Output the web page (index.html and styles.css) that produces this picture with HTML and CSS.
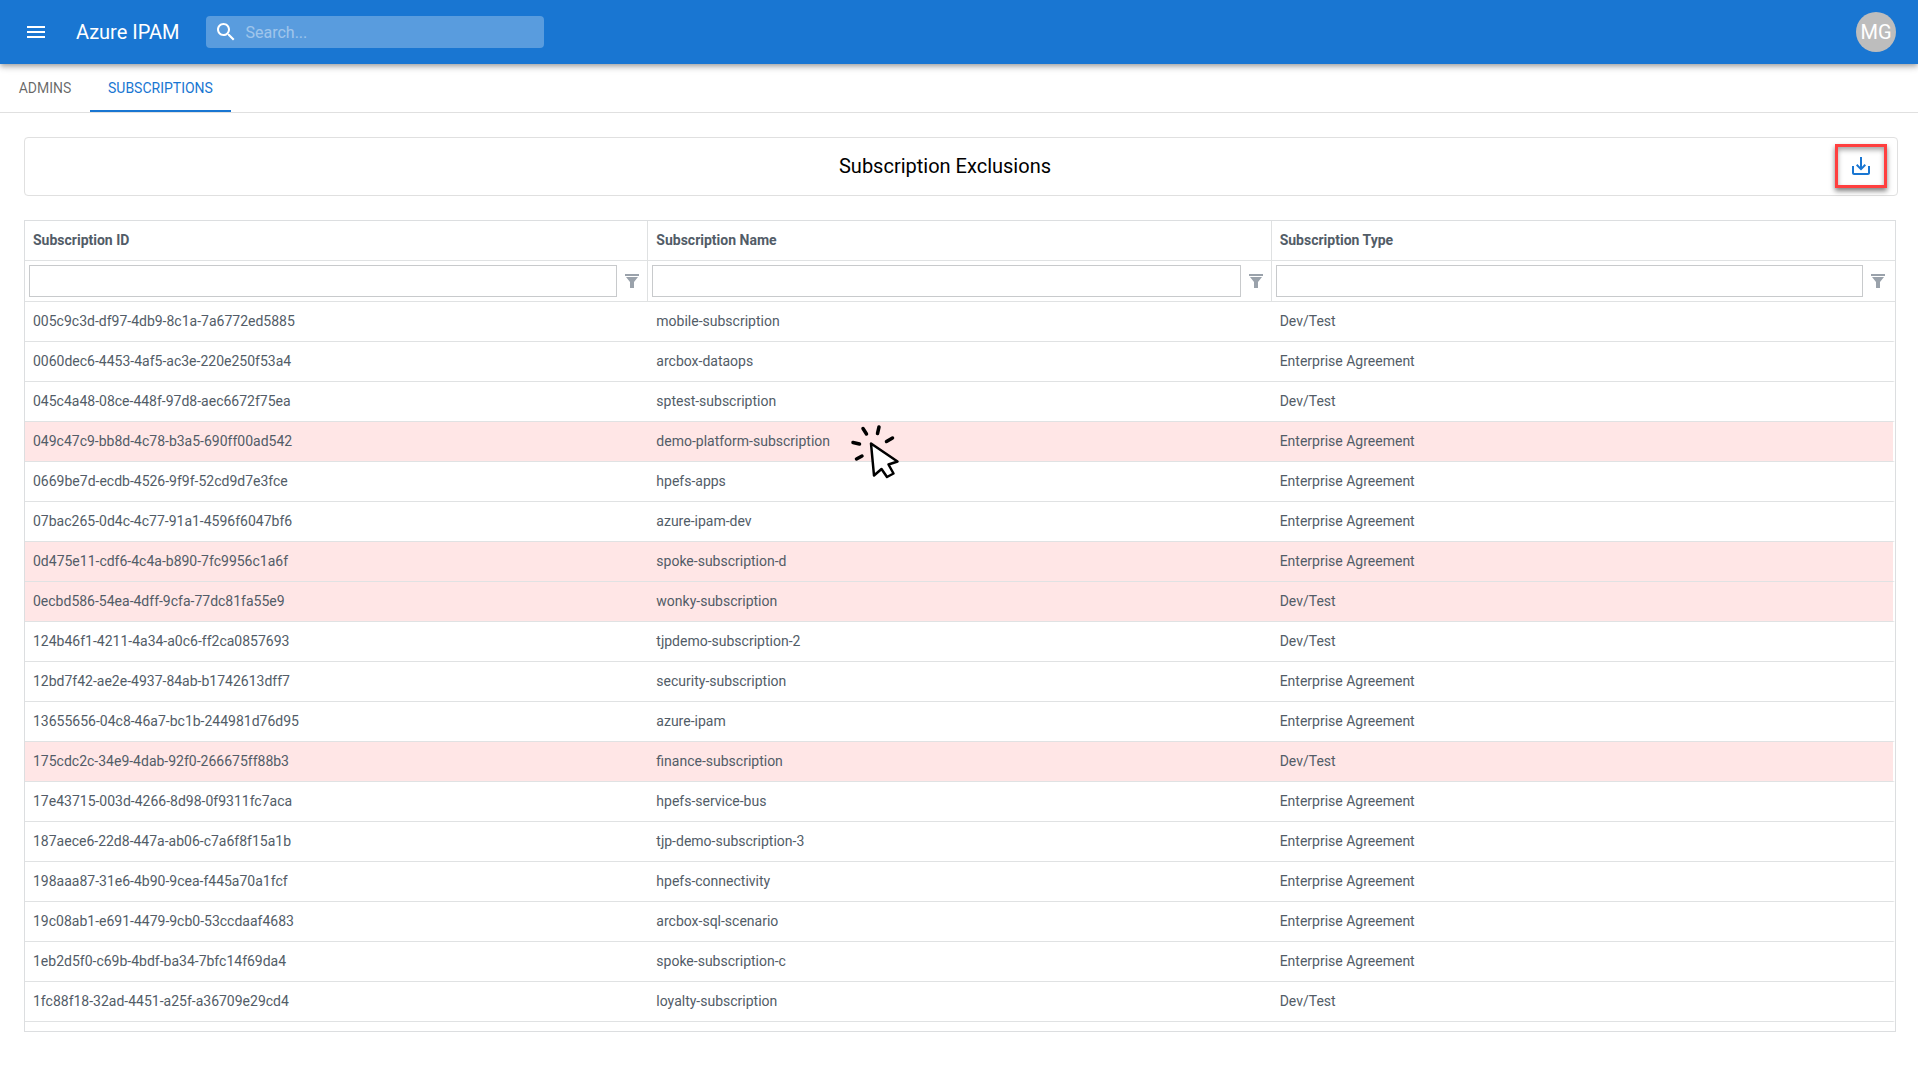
FILE: index.html
```html
<!DOCTYPE html>
<html lang="en">
<head>
<meta charset="utf-8">
<title>Azure IPAM</title>
<link rel="stylesheet" href="styles.css">
</head>
<body>
<header class="appbar">
  <button class="menu-button" aria-label="Open menu"><svg class="icon" viewBox="0 0 24 24"><path d="M3 18h18v-2H3v2zm0-5h18v-2H3v2zm0-7v2h18V6H3z"/></svg></button>
  <span class="brand">Azure IPAM</span>
  <label class="search">
    <svg class="icon" viewBox="0 0 24 24"><path d="M15.500 14h-.79l-.28-.27C15.410 12.590 16 11.110 16 9.500 16 5.910 13.090 3 9.500 3S3 5.910 3 9.500 5.910 16 9.500 16c1.610 0 3.090-.59 4.230-1.570l.27.28v.79l5 4.990L20.490 19l-4.990-5zm-6 0C7.010 14 5 11.990 5 9.500S7.010 5 9.500 5 14 7.010 14 9.500 11.990 14 9.500 14z"/></svg>
    <input class="search-input" type="search" placeholder="Search..." aria-label="Search">
  </label>
  <button class="avatar" aria-label="Account">MG</button>
</header>
<nav class="tabs">
  <a class="tab" href="#admins">ADMINS</a>
  <a class="tab tab-active" href="#subscriptions" aria-current="page">SUBSCRIPTIONS</a>
</nav>
<main class="content">
  <section class="title-card">
    <h1 class="title">Subscription Exclusions</h1>
    <button class="save-button" aria-label="Save"><svg class="icon" viewBox="0 0 24 24"><path d="M19 12v7H5v-7H3v7c0 1.100.9 2 2 2h14c1.100 0 2-.9 2-2v-7h-2zm-6 .67 2.590-2.580L17 11.500l-5 5-5-5 1.410-1.410L11 12.670V3h2z"/></svg></button>
  </section>
  <div class="grid">
    <table class="table">
      <colgroup><col class="col-id"><col><col></colgroup>
      <thead>
        <tr class="names"><th scope="col">Subscription ID</th><th scope="col">Subscription Name</th><th scope="col">Subscription Type</th></tr>
        <tr class="filters">
          <td><div class="filter"><input class="filter-input" aria-label="Filter by ID"><button class="filter-button" aria-label="ID filter options"><svg class="funnel" viewBox="0 0 14 14"><path d="M0 0h14v2H0zM1 3h12L9 8v6H5V8z"/></svg></button></div></td>
          <td><div class="filter"><input class="filter-input" aria-label="Filter by name"><button class="filter-button" aria-label="Name filter options"><svg class="funnel" viewBox="0 0 14 14"><path d="M0 0h14v2H0zM1 3h12L9 8v6H5V8z"/></svg></button></div></td>
          <td><div class="filter"><input class="filter-input" aria-label="Filter by type"><button class="filter-button" aria-label="Type filter options"><svg class="funnel" viewBox="0 0 14 14"><path d="M0 0h14v2H0zM1 3h12L9 8v6H5V8z"/></svg></button></div></td>
        </tr>
      </thead>
      <tbody>
        <tr><td>005c9c3d-df97-4db9-8c1a-7a6772ed5885</td><td>mobile-subscription</td><td>Dev/Test</td></tr>
        <tr><td>0060dec6-4453-4af5-ac3e-220e250f53a4</td><td>arcbox-dataops</td><td>Enterprise Agreement</td></tr>
        <tr><td>045c4a48-08ce-448f-97d8-aec6672f75ea</td><td>sptest-subscription</td><td>Dev/Test</td></tr>
        <tr class="excluded"><td>049c47c9-bb8d-4c78-b3a5-690ff00ad542</td><td><span class="pointed">demo-platform-subscription<svg class="pointer" viewBox="0 0 60 64"><g fill="none" stroke="#000" stroke-width="3.500" stroke-linecap="round"><path d="M18 9.500l3.500 5.500M34 8l-1.500 6.500M41.500 22.500l6-3.500M8 23.500l6.500 1.500M11.500 40l5.500-3"/></g><path d="M26 24.500l26.500 18-9 3 5 9-6.500 3.500-5.500-8-7.500 6.500z" fill="#fff" stroke="#000" stroke-width="2.500" stroke-linejoin="round"/></svg></span></td><td>Enterprise Agreement</td></tr>
        <tr><td>0669be7d-ecdb-4526-9f9f-52cd9d7e3fce</td><td>hpefs-apps</td><td>Enterprise Agreement</td></tr>
        <tr><td>07bac265-0d4c-4c77-91a1-4596f6047bf6</td><td>azure-ipam-dev</td><td>Enterprise Agreement</td></tr>
        <tr class="excluded"><td>0d475e11-cdf6-4c4a-b890-7fc9956c1a6f</td><td>spoke-subscription-d</td><td>Enterprise Agreement</td></tr>
        <tr class="excluded"><td>0ecbd586-54ea-4dff-9cfa-77dc81fa55e9</td><td>wonky-subscription</td><td>Dev/Test</td></tr>
        <tr><td>124b46f1-4211-4a34-a0c6-ff2ca0857693</td><td>tjpdemo-subscription-2</td><td>Dev/Test</td></tr>
        <tr><td>12bd7f42-ae2e-4937-84ab-b1742613dff7</td><td>security-subscription</td><td>Enterprise Agreement</td></tr>
        <tr><td>13655656-04c8-46a7-bc1b-244981d76d95</td><td>azure-ipam</td><td>Enterprise Agreement</td></tr>
        <tr class="excluded"><td>175cdc2c-34e9-4dab-92f0-266675ff88b3</td><td>finance-subscription</td><td>Dev/Test</td></tr>
        <tr><td>17e43715-003d-4266-8d98-0f9311fc7aca</td><td>hpefs-service-bus</td><td>Enterprise Agreement</td></tr>
        <tr><td>187aece6-22d8-447a-ab06-c7a6f8f15a1b</td><td>tjp-demo-subscription-3</td><td>Enterprise Agreement</td></tr>
        <tr><td>198aaa87-31e6-4b90-9cea-f445a70a1fcf</td><td>hpefs-connectivity</td><td>Enterprise Agreement</td></tr>
        <tr><td>19c08ab1-e691-4479-9cb0-53ccdaaf4683</td><td>arcbox-sql-scenario</td><td>Enterprise Agreement</td></tr>
        <tr><td>1eb2d5f0-c69b-4bdf-ba34-7bfc14f69da4</td><td>spoke-subscription-c</td><td>Enterprise Agreement</td></tr>
        <tr><td>1fc88f18-32ad-4451-a25f-a36709e29cd4</td><td>loyalty-subscription</td><td>Dev/Test</td></tr>
      </tbody>
    </table>
  </div>
</main>
</body>
</html>
```
FILE: styles.css
```css
* { box-sizing: border-box; }
body { margin: 0; background: #fff; font-family: Roboto, "Liberation Sans", sans-serif; font-size: 14px; color: rgba(0, 0, 0, 0.87); }
button { border: 0; padding: 0; background: none; color: inherit; font: inherit; cursor: pointer; display: flex; align-items: center; justify-content: center; }
input { font: inherit; }
.icon { width: 24px; height: 24px; fill: currentColor; flex: none; }

.appbar { position: relative; display: flex; align-items: center; height: 64px; padding: 0 22px 0 24px; background: #1976d2; color: #fff; box-shadow: 0 2px 4px -1px rgba(0, 0, 0, 0.2), 0 4px 5px rgba(0, 0, 0, 0.14), 0 1px 10px rgba(0, 0, 0, 0.12); }
.brand { margin: 0 26px 0 28px; font-size: 20px; line-height: 32px; font-weight: 400; white-space: nowrap; }
.search { display: flex; align-items: center; gap: 8px; width: 338px; height: 32px; padding-left: 8px; border-radius: 4px; background: rgba(255, 255, 255, 0.28); }
.search-input { flex: 1; min-width: 0; border: 0; padding: 0; background: none; outline: 0; color: #fff; font-size: 16px; }
.search-input::placeholder { color: #fff; opacity: 0.42; }
.avatar { width: 40px; height: 40px; margin-left: auto; border-radius: 50%; background: #bdbdbd; font-size: 20px; }

.tabs { display: flex; height: 49px; border-bottom: 1px solid #e0e0e0; }
.tab { display: flex; align-items: center; justify-content: center; min-width: 90px; padding: 2px 18px 0; border-bottom: 2px solid transparent; color: rgba(0, 0, 0, 0.6); font-weight: 400; text-decoration: none; }
.tab-active { border-bottom-color: #1976d2; color: #1976d2; }

.content { display: flex; flex-direction: column; gap: 24px; padding: 24px 22px 35px 24px; }
.title-card { display: flex; align-items: center; height: 59px; margin-right: -2px; padding: 0 10px 2px 0; border: 1px solid #e0e0e0; border-radius: 4px; }
.title { flex: 1; margin: 0; padding-left: 30px; font-size: 20px; line-height: 32px; font-weight: 400; text-align: center; color: #000; }
.save-button { width: 52px; height: 44px; border: 3px solid #ff3f3f; color: #1976d2; box-shadow: 0 3px 5px rgba(0, 0, 0, 0.5), inset 0 3px 5px rgba(0, 0, 0, 0.35); }

.grid { height: 812px; overflow: hidden; border: 1px solid #dcdee0; }
.table { width: 100%; table-layout: fixed; border-collapse: separate; border-spacing: 0; color: #525c67; }
.col-id { width: calc(100% / 3 + 1px); }
.table th, .table td { height: 40px; padding: 0 8px 2px; border-bottom: 1px solid #e0e2e3; text-align: left; line-height: 20px; }
.names th, .filters td { border-right: 1px solid #dfe1e2; }
.names th:last-child, .filters td:last-child { border-right: 0; }
.table .filters td { height: 41px; padding: 0 0 0 4px; }
.table .filters td:last-child { padding-right: 2px; }
.table tbody td:last-child { border-right: 2px solid #fff; }
.filter { display: flex; align-items: center; }
.filter-input { flex: 1; min-width: 0; height: 32px; border: 1px solid #c8cacc; border-radius: 0; background: #fff; }
.filter-button { width: 30px; height: 32px; }
.funnel { width: 14px; height: 14px; fill: #9aa2ab; }
.excluded td { background: #ffe6e6; }
.pointed { position: relative; }
.pointer { position: absolute; left: 189px; top: -14px; width: 60px; height: 64px; }
```
